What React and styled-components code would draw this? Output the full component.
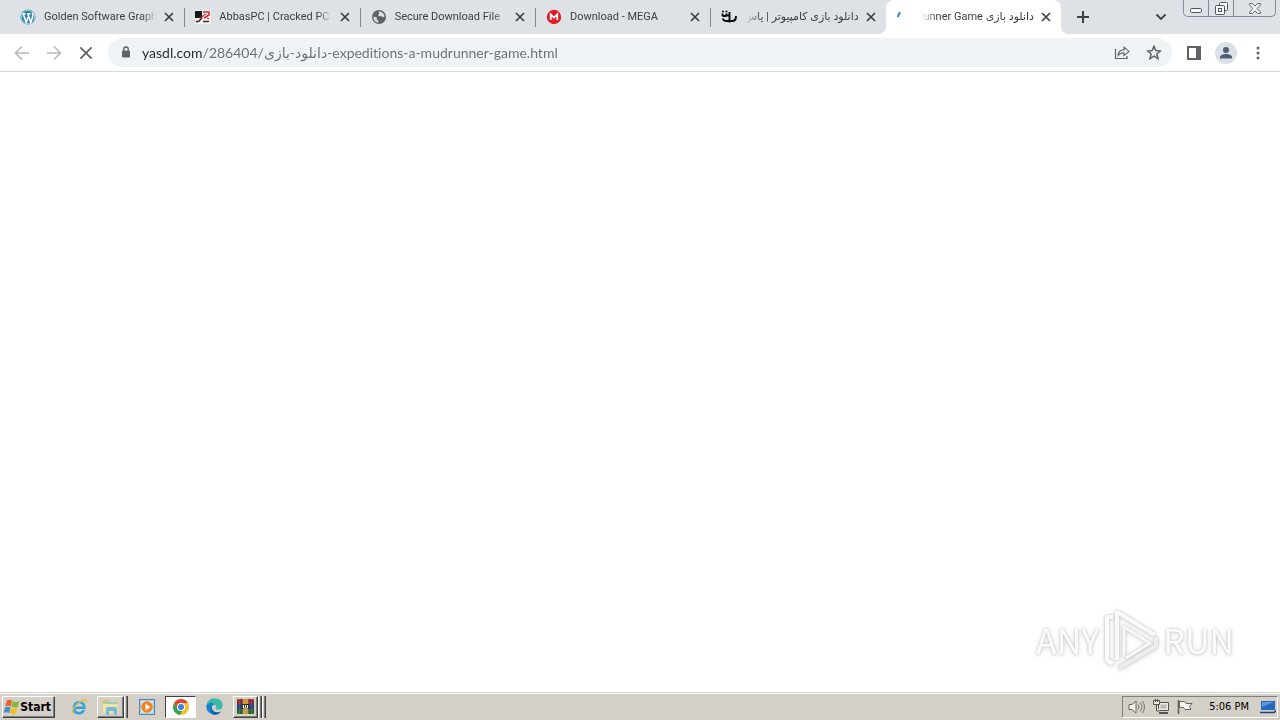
import React from "react";
import styled, { createGlobalStyle, css } from "styled-components";

const GlobalStyle = createGlobalStyle`
  *, *::before, *::after { box-sizing: border-box; }
  body { margin: 0; font-family: Roboto, "Noto Sans", "DejaVu Sans", sans-serif; background: #fff; }
  button, input { font: inherit; }
`;

const Desktop = styled.div`
  display: flex;
  flex-direction: column;
  min-height: 100vh;
`;

const plainButton = css`
  display: inline-flex;
  align-items: center;
  justify-content: center;
  padding: 0;
  border: 0;
  background: transparent;
  color: #5f6368;
`;

/* ---------- tab strip ---------- */

const TabStrip = styled.header`
  display: flex;
  height: 34px;
  padding-left: 9px;
  background: #dee1e6;
`;

const TabList = styled.nav`
  display: flex;
  flex: 0 1 1052px;
  min-width: 0;
`;

const activeTab = css`
  background: #fff;
  border-radius: 8px 8px 0 0;

  &::before,
  &::after {
    content: "";
    position: absolute;
    bottom: 0;
    width: 8px;
    height: 8px;
  }
  &::before {
    right: 100%;
    background: radial-gradient(circle at 0 0, transparent 8px, #fff 8px);
  }
  &::after {
    left: 100%;
    background: radial-gradient(circle at 100% 0, transparent 8px, #fff 8px);
  }
`;

const tabDivider = css`
  &::before {
    content: "";
    position: absolute;
    left: 0;
    top: 8px;
    width: 1px;
    height: 19px;
    background: #85888d;
  }
`;

const Tab = styled.div`
  position: relative;
  display: flex;
  align-items: center;
  flex: 1 1 0;
  min-width: 0;
  padding: 0 7px 0 11px;
  ${(p) => p.$divider && tabDivider}
  ${(p) => p.$active && activeTab}
`;

const TabIcon = styled.span`
  display: flex;
  flex: 0 0 16px;
  height: 16px;
  margin-right: 8px;
`;

const TabTitle = styled.a`
  flex: 1 1 0;
  min-width: 0;
  margin-right: 4px;
  overflow: hidden;
  white-space: nowrap;
  text-decoration: none;
  color: #3c4043;
  font-size: 11px;
  line-height: 20px;
  direction: ${(p) => (p.$rtl ? "rtl" : "ltr")};
  mask-image: linear-gradient(
    ${(p) => (p.$rtl ? "to left" : "to right")},
    #000 calc(100% - 16px),
    transparent
  );
`;

const TabClose = styled.button`
  ${plainButton}
  flex: 0 0 16px;
  height: 16px;
  color: #3c4043;
`;

const StripButton = styled.button`
  ${plainButton}
  width: 28px;
  height: 28px;
  margin: 3px 8px 0 8px;
  color: #3c4043;
`;

const StripSpacer = styled.div`
  flex: 1;
`;

const WindowControls = styled.div`
  display: flex;
  flex: 0 0 93px;
  height: 17px;
  margin-right: 4px;
  border: 1px solid #858a98;
  border-top: 0;
  border-radius: 0 0 5px 5px;
`;

const WindowButton = styled.button`
  ${plainButton}
  flex: ${(p) => (p.$wide ? "0 0 42px" : "1 1 0")};
  color: #4e5360;
  & + & { border-left: 1px solid #858a98; }
`;

/* ---------- toolbar ---------- */

const Toolbar = styled.div`
  display: flex;
  align-items: center;
  height: 38px;
  padding: 0 6px;
  border-bottom: 1px solid #d9dbde;
`;

const ToolButton = styled.button`
  ${plainButton}
  flex: 0 0 32px;
  height: 28px;
  color: ${(p) => (p.$faded ? "#b9bbbe" : "#5f6368")};
`;

const AddressBar = styled.div`
  display: flex;
  align-items: center;
  flex: 1;
  height: 29px;
  margin: 0 6px;
  padding: 0 2px 0 10px;
  border-radius: 15px;
  background: #f0f3f5;
`;

const AddressInput = styled.input`
  flex: 1;
  min-width: 0;
  height: 28px;
  margin-left: 8px;
  padding: 0;
  border: 0;
  outline: 0;
  font-family: Lato, "Noto Sans", "DejaVu Sans", sans-serif;
  font-size: 14px;
  font-variant-ligatures: no-common-ligatures;
  color: transparent;
  background: linear-gradient(to right, #25282c 61px, #6a6e73 61px);
  background-clip: text;
  -webkit-background-clip: text;
`;

/* ---------- page ---------- */

const Page = styled.main`
  display: flex;
  flex: 1;
  align-items: flex-end;
  justify-content: flex-end;
  padding: 0 46px 20px 0;
`;

const Watermark = styled.div`
  display: flex;
  align-items: center;
  gap: 4px;
  height: 64px;
  font-family: "Noto Sans CJK SC", "Liberation Sans", sans-serif;
  font-size: 34px;
  line-height: 36px;
  color: #fcfcfc;
  filter: drop-shadow(0 0 1px #c4c4c4) drop-shadow(0 1px 2px #dcdcdc);
`;

/* ---------- taskbar ---------- */

const Taskbar = styled.footer`
  display: flex;
  align-items: center;
  height: 28px;
  padding: 0 2px;
  border-top: 1px solid #d4d0c8;
  box-shadow: inset 0 1px 0 #fff;
  background: #d4d0c8;
  font-size: 11px;
  color: #000;
`;

const raised = css`
  border: 1px solid;
  border-color: #fff #404040 #404040 #fff;
  box-shadow: inset -1px -1px 0 #808080;
`;

const StartButton = styled.button`
  ${plainButton}
  ${raised}
  width: 53px;
  height: 22px;
  margin-right: 7px;
  padding-right: 3px;
  background: #d4d0c8;
  color: #000;
  font-family: "DejaVu Sans Condensed", "DejaVu Sans", sans-serif;
  font-weight: 700;
  font-size: 12px;
`;

const TaskSlot = styled.div`
  display: flex;
  flex: 0 0 ${(p) => (p.$stacked ? "36px" : "34px")};
  height: 22px;
  padding: 0 2px 0 1px;
`;

const TaskButton = styled.button`
  ${plainButton}
  flex: 1;
  ${(p) => p.$open && raised}
  ${(p) =>
    p.$pressed &&
    css`
      border: 1px solid;
      border-color: #404040 #fff #fff #404040;
      background: #fff;
    `}
`;

const StackEdge = styled.span`
  width: 4px;
  border-right: 1px solid #404040;
  box-shadow: inset -1px 0 0 #808080, inset 1px 0 0 #fff;
`;

const Tray = styled.div`
  display: flex;
  align-items: center;
  gap: 8px;
  height: 22px;
  margin-left: auto;
  padding: 0 1px 0 5px;
  border: 1px solid;
  border-color: #808080 #fff #fff #808080;
`;

const Clock = styled.time`
  margin: 0 3px 0 8px;
  font-family: "DejaVu Sans Condensed", "DejaVu Sans", sans-serif;
  font-size: 11px;
  line-height: 16px;
`;

/* ---------- drawings ---------- */

const Svg = ({ w = 16, h = w, vw = w, vh = h, children }) => (
  <svg width={w} height={h} viewBox={`0 0 ${vw} ${vh}`} fill="none" aria-hidden="true">
    {children}
  </svg>
);

const WordPressIcon = () => (
  <Svg>
    <circle cx="8" cy="8" r="7.6" fill="#3086ad" />
    <circle cx="8" cy="8" r="6.8" stroke="#d7edf5" strokeWidth=".7" />
    <path d="M2.2 4.8h3.4M7 4.8h3.6M3.2 5l3 8.3L8.2 8M7.9 5l2.8 8.2 2.3-6.5c.4-1.4-.6-2.3-.7-3.3" stroke="#fff" strokeWidth="1.6" />
  </Svg>
);

const AbbasIcon = () => (
  <Svg>
    <rect y="1" width="16" height="14" fill="#f4eeee" />
    <rect y="2" width="7" height="7" fill="#16191b" />
    <path d="M8 3h6v3l-5 3" stroke="#c82f35" strokeWidth="1.5" />
    <path d="M9 5l2 1M12 9l2 1" stroke="#cf3036" strokeWidth="1.2" />
    <path d="M1 13l3-1 3-3M8 12.500h6" stroke="#3e3034" strokeWidth="1.5" />
    <path d="M5 10l4-4" stroke="#cf3036" strokeWidth="1.3" />
  </Svg>
);

const GlobeIcon = () => (
  <Svg>
    <circle cx="8" cy="8" r="7" fill="#5f6368" />
    <path d="M2.6 7.5l3.2 1v2.3l1.5.8v2C4.400 13.300 2.200 11 2.600 7.500zM8 2.500c3 0 5.200 2.200 5.500 5l-1.300.7-1.700-1H8.300L7 6l1.300-1.200L7.700 3.800z" fill="#dee1e6" />
  </Svg>
);

const MegaIcon = () => (
  <Svg>
    <circle cx="8" cy="8" r="7.2" fill="#e11e27" />
    <path d="M4.700 11V5.300L8 8.500l3.300-3.200V11" stroke="#fff" strokeWidth="1.7" />
  </Svg>
);

const YasIcon = () => (
  <Svg>
    <path d="M1.500 4.500v1.500c0 1.500 4 1.500 4 0V4.500M5 6.500h3M8.500 3v10.500M2 9.500c0 2 1.500 2.500 4 2.500h5c3 0 4-1.500 4-5" stroke="#08090a" strokeWidth="1.900" />
    <path d="M1 2.500h2M4.500 2.500h2" stroke="#08090a" strokeWidth="1.500" />
  </Svg>
);

const SpinnerIcon = () => (
  <Svg>
    <path d="M1 8.200C1.200 6.200 2 4.500 3.400 3.300" stroke="#3f78d6" strokeWidth="2" />
  </Svg>
);

const CrossIcon = ({ size = 10, stroke = 1.7 }) => (
  <Svg w={size} vw={10} vh={10}>
    <path d="M1 1l8 8M9 1L1 9" stroke="currentColor" strokeWidth={stroke} />
  </Svg>
);

const ArrowIcon = ({ forward }) => (
  <Svg>
    <path
      d={forward ? "M1 8h13M8 1.500L14.500 8 8 14.500" : "M15 8H2M8 1.500L1.500 8 8 14.500"}
      stroke="currentColor"
      strokeWidth="1.700"
    />
  </Svg>
);

const PlusIcon = () => (
  <Svg w={12}>
    <path d="M6 0v12M0 6h12" stroke="currentColor" strokeWidth="2" />
  </Svg>
);

const ChevronIcon = () => (
  <Svg w={12} h={8}>
    <path d="M1.500 1.500L6 6l4.500-4.500" stroke="currentColor" strokeWidth="1.800" />
  </Svg>
);

const MinimizeIcon = () => (
  <Svg w={12} h={12}>
    <rect x=".5" y="6.500" width="11" height="4" rx="1" fill="#f8f9fb" stroke="currentColor" />
  </Svg>
);

const RestoreIcon = () => (
  <Svg w={13} h={13}>
    <path d="M4.500 4V1.500q0-1 1-1h6q1 0 1 1v6q0 1-1 1H9" fill="#f8f9fb" stroke="currentColor" />
    <rect x=".5" y="3.500" width="9" height="9" rx="1" fill="#f8f9fb" stroke="currentColor" />
    <rect x="3.500" y="6.500" width="3" height="3" stroke="currentColor" />
  </Svg>
);

const CloseWindowIcon = () => (
  <Svg w={12} h={11}>
    <path d="M.6.600h3L6 3.300 8.400.600h3v1.500L8 5.500l3.400 3.400v1.500h-3L6 7.700l-2.400 2.700h-3V8.900L4 5.500.6 2.100z" fill="#f8f9fb" stroke="currentColor" strokeWidth=".9" />
  </Svg>
);

const LockIcon = () => (
  <Svg w={16}>
    <rect x="4" y="5.500" width="8" height="7" rx="1" fill="#5f6368" />
    <path d="M5.700 6.500V4.300a2.300 2.300 0 014.600 0v2.200" stroke="#5f6368" strokeWidth="1.300" />
  </Svg>
);

const ShareIcon = () => (
  <Svg>
    <path d="M1.500 4v9.500h11.500V11" stroke="currentColor" strokeWidth="1.200" />
    <path d="M4 10.500c.3-3.500 2.500-5.500 6-5.600V2.200L15 6.400l-5 4.200V7.900c-2.700 0-4.500.7-6 2.600z" stroke="currentColor" strokeWidth="1.100" />
  </Svg>
);

const StarIcon = () => (
  <Svg>
    <path d="M8 1.300l1.800 4.300 4.600.4-3.500 3 1.100 4.600L8 11.100l-4 2.500L5.100 9 1.600 6l4.600-.4z" stroke="currentColor" strokeWidth="1.500" />
  </Svg>
);

const PanelIcon = () => (
  <Svg w={14}>
    <rect x="1" y="1" width="12" height="12" stroke="currentColor" strokeWidth="2" />
    <path d="M9 1h4v12H9z" fill="currentColor" />
  </Svg>
);

const ProfileIcon = () => (
  <Svg w={22}>
    <circle cx="11" cy="11" r="11" fill="#dce1e7" />
    <circle cx="11" cy="8" r="3" fill="#525c73" />
    <path d="M5 16.500v-1.500c0-2 3.500-3 6-3s6 1 6 3v1.500z" fill="#525c73" />
  </Svg>
);

const MenuIcon = () => (
  <Svg>
    <path d="M8 1.500a1.500 1.500 0 110 3 1.500 1.500 0 010-3zM8 6.500a1.500 1.500 0 110 3 1.500 1.500 0 010-3zM8 11.500a1.500 1.500 0 110 3 1.500 1.500 0 010-3z" fill="currentColor" />
  </Svg>
);

const PlayMark = () => (
  <Svg w={56} h={64}>
    <path d="M10 9H4v43l6 4" stroke="#fafafa" strokeWidth="4" strokeLinejoin="round" />
    <path d="M14 52V4l38 23" stroke="#fafafa" strokeWidth="4" strokeLinejoin="round" />
    <path d="M21 49V19l26 16-24 15" stroke="#f7f7f7" strokeWidth="3" strokeLinejoin="round" />
    <path d="M16 60l37-22v-9" stroke="#ededed" strokeWidth="4" strokeLinejoin="round" />
  </Svg>
);

const WindowsFlag = () => (
  <Svg w={18} vw={16} vh={16}>
    <path d="M3.500 2c2-1 3.500-.7 5 .2L7.200 7.500C5.500 6.700 4 6.600 2.200 7.400z" fill="#e9652b" />
    <path d="M9.200 2.500c1.700 1 3.500 1 5.800.2l-1.400 5.200c-2 .8-3.800.7-5.600-.2z" fill="#80b83b" />
    <path d="M2 8.200c1.800-.8 3.400-.6 5 .2l-1.300 5.200c-1.600-.9-3.200-1-5.100-.2z" fill="#3f8fd5" />
    <path d="M7.700 8.700c1.700.9 3.500 1 5.600.2L12 14c-2 .8-3.800.7-5.600-.2z" fill="#f5bf2c" />
  </Svg>
);

const ExplorerBrowserIcon = () => (
  <Svg w={18}>
    <path d="M14 12c-1 2-2.500 3.200-4.700 3.200-3.300 0-5.300-2.200-5.300-5.500s2.200-5.500 5.400-5.500c3 0 5 2.200 4.900 5.600H5" stroke="#36a2dc" strokeWidth="2.600" />
    <path d="M2.800 16C.6 14.300 5 7 10.500 3.500c4-2.600 6.500-2.300 6 1" stroke="#e8c341" strokeWidth="1.300" />
  </Svg>
);

const FolderIcon = () => (
  <Svg w={18}>
    <path d="M1 2h6l1.500 2H16v11H1z" fill="#dcc572" />
    <path d="M3 4h11v8H3z" fill="#9ed0c1" />
    <path d="M1 6h15v9H1z" fill="#f0e2a4" />
    <path d="M4 17v-6q0-2 2-2h7q2 0 2 2v6h-3v-4H7v4z" fill="#77b9d9" />
  </Svg>
);

const MediaIcon = () => (
  <Svg w={16}>
    <rect x=".5" y=".5" width="15" height="15" fill="#a8cde9" stroke="#5087b5" />
    <rect x="2" y="2" width="12" height="12" fill="#cfe2ee" />
    <circle cx="8" cy="8" r="5.800" fill="#ed8620" />
    <path d="M6.500 4.800L11.300 8l-4.800 3.200z" fill="#fff" />
  </Svg>
);

const ChromeIcon = () => (
  <Svg w={16}>
    <circle cx="8" cy="8" r="8" fill="#f2c331" />
    <path d="M1.100 4A8 8 0 0114.900 4H8a4 4 0 00-3.500 6z" fill="#df4538" />
    <path d="M1.100 4l3.500 6A4 4 0 008 12l1 0-2 3.950A8 8 0 011.100 4z" fill="#38a256" />
    <circle cx="8" cy="8" r="4" fill="#fff" />
    <circle cx="8" cy="8" r="3" fill="#3f80e2" />
  </Svg>
);

const EdgeIcon = () => (
  <Svg w={17} vw={16} vh={16}>
    <path d="M.4 7C1 2.700 4.300.2 8 .2c4.600 0 7.800 3 7.800 6.800 0 2.600-2 4-4.600 4-2 0-2.900-.8-2-2 .8-1.300 0-3-2.200-3C4 6 1.500 6.500.4 7z" fill="#39bca5" />
    <path d="M.4 7C2.600 3.600 7 3.800 8.400 6.200 5.500 6.500 4.900 9 6.200 11c1.600 2.500 4.800 3 8 1.800A7.800 7.800 0 01.4 7z" fill="#1584d0" />
    <path d="M5.200 8.500c-.5 4 4 6.500 9 4.300-1.500 2-4 3.200-6.500 3-3-1-4.500-4.500-2.500-7.300z" fill="#165fa8" />
  </Svg>
);

const ArchiveIcon = () => (
  <Svg w={17}>
    <path d="M0 1h17v5H0z" fill="#b4383c" />
    <path d="M0 6h17v5H0z" fill="#3554a5" />
    <path d="M0 11h17v5H0z" fill="#35863e" />
    <path d="M1 2v13M4 1v15M13 1v15M16 2v13" stroke="#292832" strokeWidth=".8" />
    <path d="M6 1h5v15H6z" fill="#c69d3f" />
    <path d="M5 6h7v5H5z" fill="#332d28" />
    <path d="M6.500 7v3h4V7M8.500 7v2" stroke="#fff" />
  </Svg>
);

const SpeakerIcon = () => (
  <Svg w={17} h={16}>
    <path d="M1 5.500h3L8 2v12l-4-3.500H1z" fill="#f4f3ef" stroke="#66645f" />
    <path d="M10 5.500q2 2.500 0 5M12 3.500q4 4.500 0 9M14.500 2q4 6 0 12" stroke="#77746f" />
  </Svg>
);

const NetworkIcon = () => (
  <Svg>
    <path d="M5.500 3.500h10v8h-10z" fill="#e9e8e3" stroke="#55534f" />
    <path d="M7.500 5.500h6v4h-6z" fill="#bab8b2" />
    <path d="M6 14h9" stroke="#55534f" strokeWidth="2" />
    <path d="M.500 1.500h6v4h-6zM2.500 0v3M4.500 0v3M3.500 6v6h3" fill="#e9e8e3" stroke="#55534f" />
  </Svg>
);

const FlagIcon = () => (
  <Svg>
    <path d="M1.500 1v14" stroke="#5e5c57" strokeWidth="1.500" />
    <path d="M2.500 2.500h5l1.500 2h6l-2.500 3 1.500 3H8l-1.500-2h-4z" fill="#f5f4f0" stroke="#65635e" />
  </Svg>
);

const DesktopIcon = () => (
  <Svg w={16} h={14}>
    <path d="M1 1h14v9H1z" fill="#2469be" />
    <path d="M2 2h12L2 7z" fill="#5699df" />
    <path d="M0 12.500h14l2-2" stroke="#1e4170" strokeWidth="1.500" />
  </Svg>
);

const tabs = [
  { title: "Golden Software Grapher", Icon: WordPressIcon },
  { title: "AbbasPC | Cracked PC Software", Icon: AbbasIcon, divider: true },
  { title: "Secure Download File", Icon: GlobeIcon, divider: true },
  { title: "Download - MEGA", Icon: MegaIcon, divider: true },
  { title: "دانلود بازی کامپیوتر | یاس دانلود", Icon: YasIcon, divider: true, rtl: true },
  { title: "دانلود بازی Expeditions A MudRunner Game", Icon: SpinnerIcon, active: true, rtl: true },
];

export default function App() {
  return (
    <Desktop>
      <GlobalStyle />
      <TabStrip>
        <TabList aria-label="Tabs">
          {tabs.map(({ title, Icon, divider, active, rtl }) => (
            <Tab key={title} $divider={divider} $active={active}>
              <TabIcon><Icon /></TabIcon>
              <TabTitle href="#" $rtl={rtl} aria-current={active ? "page" : undefined}>
                {title}
              </TabTitle>
              <TabClose aria-label="Close tab"><CrossIcon /></TabClose>
            </Tab>
          ))}
        </TabList>
        <StripButton aria-label="New tab"><PlusIcon /></StripButton>
        <StripSpacer />
        <StripButton aria-label="Search tabs"><ChevronIcon /></StripButton>
        <WindowControls>
          <WindowButton aria-label="Minimize"><MinimizeIcon /></WindowButton>
          <WindowButton aria-label="Restore"><RestoreIcon /></WindowButton>
          <WindowButton $wide aria-label="Close"><CloseWindowIcon /></WindowButton>
        </WindowControls>
      </TabStrip>

      <Toolbar>
        <ToolButton $faded aria-label="Back"><ArrowIcon /></ToolButton>
        <ToolButton $faded aria-label="Forward"><ArrowIcon forward /></ToolButton>
        <ToolButton aria-label="Stop loading"><CrossIcon size={14} stroke={1.3} /></ToolButton>
        <AddressBar>
          <LockIcon />
          <AddressInput
            aria-label="Address"
            spellCheck={false}
            defaultValue="yasdl.com/286404/دانلود-بازی-expeditions-a-mudrunner-game.html"
          />
          <ToolButton aria-label="Share"><ShareIcon /></ToolButton>
          <ToolButton aria-label="Bookmark"><StarIcon /></ToolButton>
        </AddressBar>
        <ToolButton aria-label="Side panel"><PanelIcon /></ToolButton>
        <ToolButton aria-label="Profile"><ProfileIcon /></ToolButton>
        <ToolButton aria-label="Menu"><MenuIcon /></ToolButton>
      </Toolbar>

      <Page>
        <Watermark>
          <span>ANY</span>
          <PlayMark />
          <span>RUN</span>
        </Watermark>
      </Page>

      <Taskbar>
        <StartButton><WindowsFlag />Start</StartButton>
        <TaskSlot>
          <TaskButton aria-label="Internet Explorer"><ExplorerBrowserIcon /></TaskButton>
        </TaskSlot>
        <TaskSlot>
          <TaskButton $open aria-label="File Explorer"><FolderIcon /></TaskButton>
          <StackEdge />
        </TaskSlot>
        <TaskSlot>
          <TaskButton aria-label="Media Player"><MediaIcon /></TaskButton>
        </TaskSlot>
        <TaskSlot>
          <TaskButton $pressed aria-label="Chrome"><ChromeIcon /></TaskButton>
        </TaskSlot>
        <TaskSlot>
          <TaskButton aria-label="Edge"><EdgeIcon /></TaskButton>
        </TaskSlot>
        <TaskSlot $stacked>
          <TaskButton $open aria-label="WinRAR"><ArchiveIcon /></TaskButton>
          <StackEdge />
          <StackEdge />
        </TaskSlot>
        <Tray>
          <SpeakerIcon />
          <NetworkIcon />
          <FlagIcon />
          <Clock dateTime="17:06">5:06 PM</Clock>
          <DesktopIcon />
        </Tray>
      </Taskbar>
    </Desktop>
  );
}
